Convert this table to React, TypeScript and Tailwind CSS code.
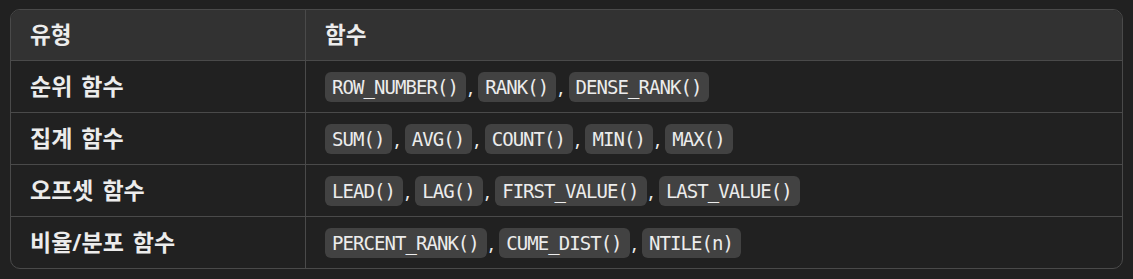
const rows: { type: string; fns: string[] }[] = [
  { type: '순위 함수', fns: ['ROW_NUMBER()', 'RANK()', 'DENSE_RANK()'] },
  { type: '집계 함수', fns: ['SUM()', 'AVG()', 'COUNT()', 'MIN()', 'MAX()'] },
  { type: '오프셋 함수', fns: ['LEAD()', 'LAG()', 'FIRST_VALUE()', 'LAST_VALUE()'] },
  { type: '비율/분포 함수', fns: ['PERCENT_RANK()', 'CUME_DIST()', 'NTILE(n)'] },
]

function Code({ children }: { children: string }) {
  return (
    <code className="rounded-[6px] bg-[#424242] py-[3px] pl-[7px] pr-[8px] text-[19px] leading-[24px] tracking-[-0.95px] text-[#ececec] font-['DejaVu_Sans_Mono',monospace]">
      {children}
    </code>
  )
}

export default function App() {
  return (
    <div className="min-h-screen bg-[#212121] px-[10px] pt-[9px] pb-[10px] font-['Noto_Sans','Noto_Sans_CJK_KR',sans-serif] text-[#ececec]">
      <div className="overflow-hidden rounded-[10px] border border-[#4a4a4a]">
        <div className="grid h-[50px] grid-cols-[294px_1fr] bg-[#323232]">
          <div className="flex items-center pl-[19px] text-[22.5px] font-semibold">유형</div>
          <div className="flex items-center border-l border-[#4a4a4a] pl-[19px] text-[22.5px] font-semibold">함수</div>
        </div>
        {rows.map((r) => (
          <div key={r.type} className="grid h-[52px] grid-cols-[294px_1fr] border-t border-[#4a4a4a]">
            <div className="flex items-center pl-[19px] text-[23px] font-semibold [word-spacing:3px]">{r.type}</div>
            <div className="flex items-center border-l border-[#4a4a4a] pl-[19px] text-[20px]">
              {r.fns.map((f, i) => (
                <span key={f} className="flex items-center">
                  <Code>{f}</Code>
                  {i < r.fns.length - 1 && <span className="ml-[2px] mr-[5px]">,</span>}
                </span>
              ))}
            </div>
          </div>
        ))}
      </div>
    </div>
  )
}
